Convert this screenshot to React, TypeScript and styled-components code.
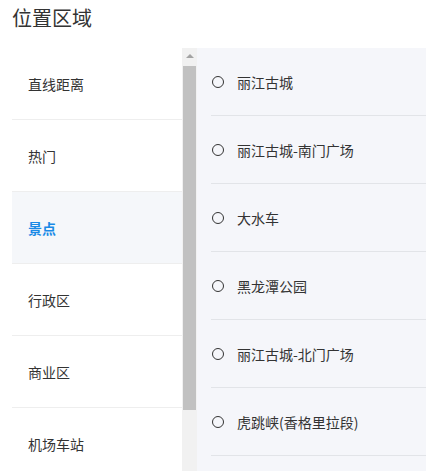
import { useState } from "react";
import styled, { createGlobalStyle } from "styled-components";

const GlobalStyle = createGlobalStyle`
  html, body {
    margin: 0;
    padding: 0;
    background: #ffffff;
    overflow: hidden;
  }
  body {
    font-family: "Noto Sans CJK SC", "Noto Sans", sans-serif;
    color: #333333;
  }
`;

const categories = ["直线距离", "热门", "景点", "行政区", "商业区", "机场车站"];

const places = [
  "丽江古城",
  "丽江古城-南门广场",
  "大水车",
  "黑龙潭公园",
  "丽江古城-北门广场",
  "虎跳峡(香格里拉段)",
];

const App = () => {
  const [active, setActive] = useState(2);
  const [picked, setPicked] = useState<number | null>(null);

  return (
    <Page>
      <GlobalStyle />
      <Title>位置区域</Title>
      <Body>
        <Menu>
          {categories.map((name, i) => (
            <MenuItem key={name} $active={i === active} onClick={() => setActive(i)}>
              {name}
            </MenuItem>
          ))}
        </Menu>
        <ScrollBar>
          <ArrowUp />
          <Thumb />
        </ScrollBar>
        <List>
          {places.map((name, i) => (
            <Option key={name} onClick={() => setPicked(i)}>
              <Radio $checked={picked === i} />
              <span>{name}</span>
            </Option>
          ))}
        </List>
      </Body>
    </Page>
  );
};

const Page = styled.div`
  height: 471px;
  overflow: hidden;
`;

const Title = styled.div`
  height: 48px;
  padding: 5px 12px 0;
  box-sizing: border-box;
  font-size: 20px;
  line-height: 26px;
  color: #333333;
`;

const Body = styled.div`
  display: flex;
  padding-left: 12px;
  height: 423px;
`;

const Menu = styled.div`
  width: 170px;
  flex-shrink: 0;
  display: flex;
  flex-direction: column;
`;

const MenuItem = styled.div<{ $active: boolean }>`
  height: 72px;
  flex-shrink: 0;
  box-sizing: border-box;
  display: flex;
  align-items: center;
  padding-left: 16px;
  font-size: 14px;
  border-bottom: 1px solid #eeeeee;
  color: ${(p) => (p.$active ? "#1a8ae6" : "#333333")};
  font-weight: ${(p) => (p.$active ? 700 : 400)};
  background: ${(p) => (p.$active ? "#f5f7fa" : "#ffffff")};
  cursor: pointer;
`;

const ScrollBar = styled.div`
  width: 15px;
  flex-shrink: 0;
  background: #f1f1f1;
  display: flex;
  flex-direction: column;
  align-items: center;
`;

const ArrowUp = styled.div`
  margin-top: 6px;
  width: 0;
  height: 0;
  border-left: 4px solid transparent;
  border-right: 4px solid transparent;
  border-bottom: 4px solid #a3a3a3;
`;

const Thumb = styled.div`
  margin-top: 8px;
  width: 13px;
  height: 344px;
  background: #c1c1c1;
`;

const List = styled.div`
  flex: 1;
  background: #f5f6fa;
  padding-left: 14px;
`;

const Option = styled.div`
  height: 68px;
  box-sizing: border-box;
  display: flex;
  align-items: center;
  gap: 13px;
  padding-left: 1px;
  font-size: 14px;
  color: #333333;
  border-bottom: 1px solid #e2e4e8;
  cursor: pointer;
`;

const Radio = styled.span<{ $checked: boolean }>`
  width: 12px;
  height: 12px;
  box-sizing: border-box;
  border-radius: 50%;
  border: 1px solid #333333;
  background: ${(p) => (p.$checked ? "radial-gradient(circle, #1a8ae6 45%, transparent 50%)" : "transparent")};
  flex-shrink: 0;
`;

export default App;
